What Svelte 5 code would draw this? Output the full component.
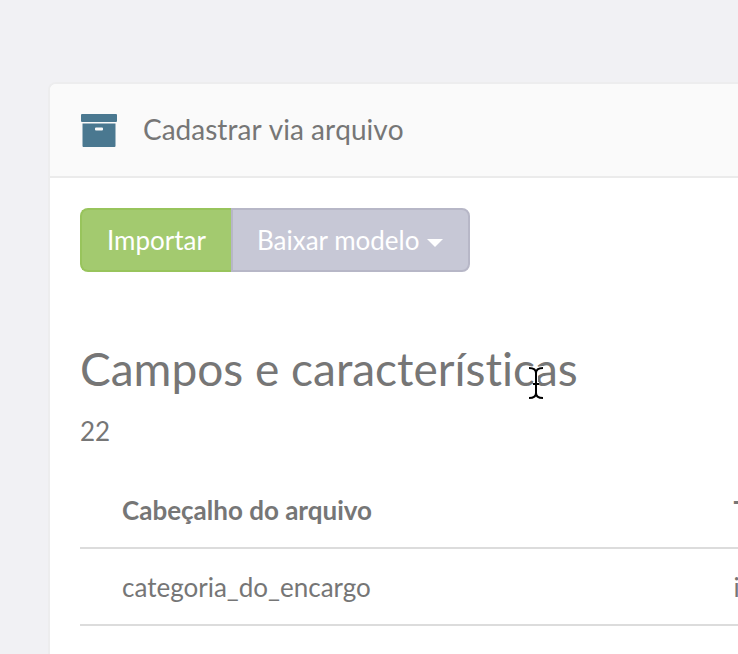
<script>
  export let title = "Cadastrar via arquivo";
  export let heading = "Campos e características";
  export let total = 22;
  export let columns = ["Cabeçalho do arquivo", "T"];
  export let rows = [["categoria_do_encargo", "i"]];
</script>

<div class="page">
  <section class="panel">
    <header class="panel-heading">
      <svg class="archive" viewBox="0 -2 36 36" aria-hidden="true">
        <rect x="0" y="0" width="36" height="8" rx="1" />
        <path
          fill-rule="evenodd"
          d="M1.5 9.5h33V32a1 1 0 0 1-1 1h-31a1 1 0 0 1-1-1zM15 13.5a1 1 0 0 0-1 1v1a1 1 0 0 0 1 1h6a1 1 0 0 0 1-1v-1a1 1 0 0 0-1-1z" />
      </svg>
      <h1>{title}</h1>
    </header>
    <div class="panel-body">
      <div class="btn-group">
        <button type="button" class="btn btn-success">Importar</button>
        <button type="button" class="btn btn-default" aria-haspopup="true">
          Baixar modelo
          <span class="caret"></span>
        </button>
      </div>

      <h2>{heading}</h2>
      <p>{total}</p>

      <table>
        <thead>
          <tr>
            {#each columns as column}
              <th>{column}</th>
            {/each}
          </tr>
        </thead>
        <tbody>
          {#each rows as row}
            <tr>
              {#each row as cell}
                <td>{cell}</td>
              {/each}
            </tr>
          {/each}
        </tbody>
      </table>
    </div>
  </section>

  <svg class="cursor" viewBox="0 0 18 36" aria-hidden="true">
    <path class="halo" d="M2 3c4 0 7 1 7 5v20c0 4-3 5-7 5M16 3c-4 0-7 1-7 5v20c0 4 3 5 7 5M6 19h6" />
    <path class="beam" d="M2 3c4 0 7 1 7 5v20c0 4-3 5-7 5M16 3c-4 0-7 1-7 5v20c0 4 3 5 7 5M6 19h6" />
  </svg>
</div>

<style>
  :global(body) {
    margin: 0;
    background-color: #f1f1f4;
  }
  .page {
    position: relative;
    display: flex;
    box-sizing: border-box;
    min-height: 100vh;
    padding: 82px 0 0 48px;
    overflow: hidden;
    color: #767676;
    font-family: Lato, sans-serif;
    font-size: 26px;
    font-variant-ligatures: none;
    line-height: 36px;
  }
  .panel {
    flex: 1;
    min-width: 0;
    border: 2px solid #ededee;
    border-right: 0;
    border-bottom: 0;
    border-radius: 8px 0 0 0;
    background-color: #fff;
  }
  .panel-heading {
    display: flex;
    align-items: flex-start;
    gap: 26px;
    padding: 28px 31px;
    border-bottom: 2px solid #ebebeb;
    border-radius: 6px 0 0 0;
    background-color: #fafafa;
  }
  .archive {
    width: 36px;
    height: 36px;
    fill: #4a7890;
  }
  h1 {
    margin: 0;
    font-size: 28px;
    font-kerning: none;
    font-weight: 400;
    line-height: 34px;
  }
  .panel-body {
    padding: 30px 0 0 30px;
  }
  .btn-group {
    display: flex;
  }
  .btn {
    display: flex;
    align-items: center;
    gap: 8px;
    padding: 12px 25px;
    border: 2px solid;
    color: #fff;
    font: inherit;
    cursor: pointer;
  }
  .btn-success {
    border-color: #98c45c;
    border-right: 0;
    border-radius: 8px 0 0 8px;
    background-color: #a3ca6f;
  }
  .btn-default {
    padding-left: 24px;
    border-color: #b7b7c7;
    border-radius: 0 8px 8px 0;
    background-color: #c7c8d6;
  }
  .caret {
    border-top: 8px solid #fff;
    border-right: 8px solid transparent;
    border-left: 8px solid transparent;
    margin-top: 5px;
  }
  h2 {
    margin: 71px 0 18px;
    font-size: 46px;
    font-weight: 400;
    line-height: 52px;
  }
  p {
    margin: 0 0 23px;
  }
  table {
    width: 100%;
    table-layout: fixed;
    border-collapse: separate;
    border-spacing: 0;
  }
  th,
  td {
    padding: 20px 0 19px 2px;
    border-bottom: 2px solid #dcdcdc;
    text-align: left;
    white-space: nowrap;
  }
  th:first-child,
  td:first-child {
    width: 99%;
    box-sizing: border-box;
    padding-left: 42px;
  }
  .cursor {
    position: absolute;
    top: 365px;
    left: 527px;
    width: 18px;
    height: 36px;
    fill: none;
  }
  .halo {
    stroke: #fff;
    stroke-width: 4;
  }
  .beam {
    stroke: #000;
    stroke-width: 2;
  }
</style>
